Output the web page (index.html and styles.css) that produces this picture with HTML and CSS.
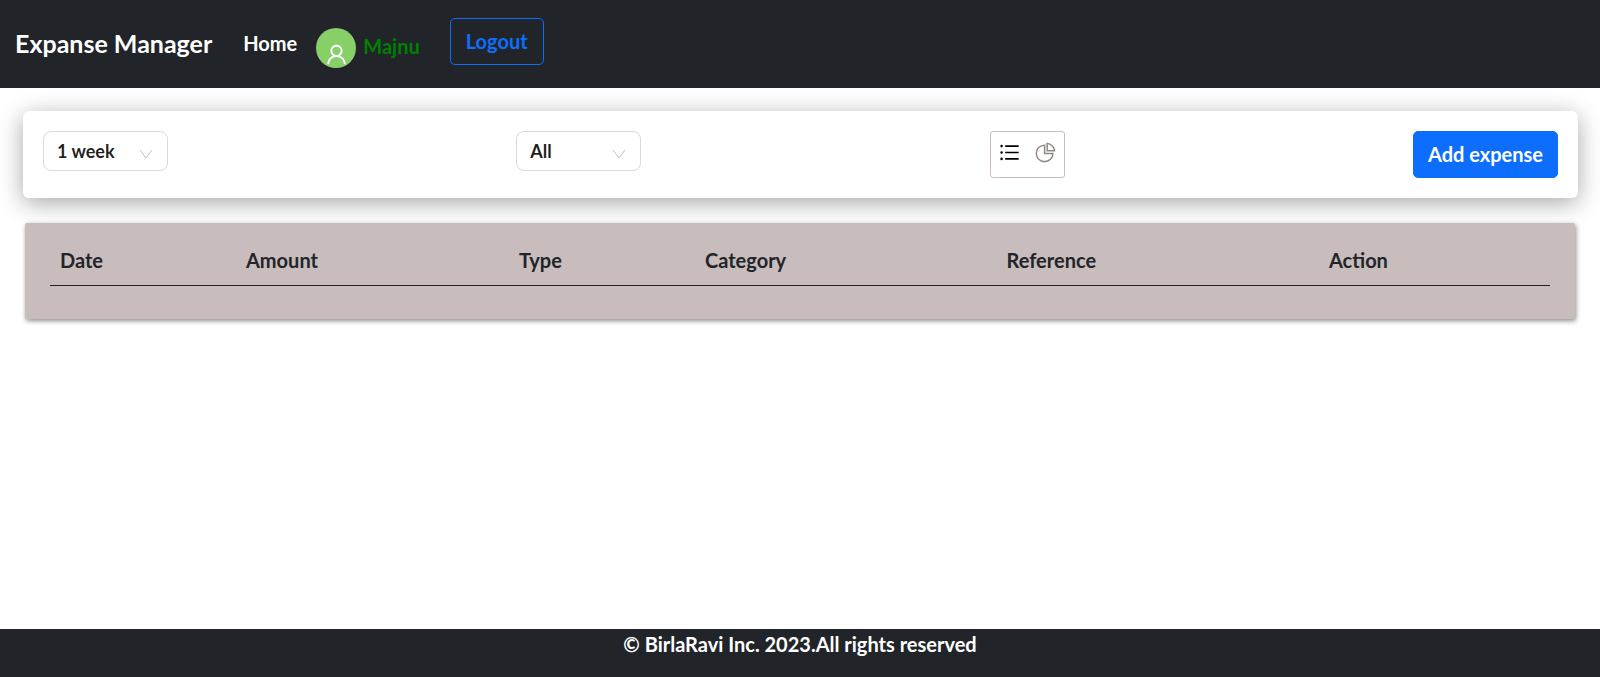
FILE: index.html
```html
<!DOCTYPE html>
<html lang="en">
    <head>
        <meta charset="UTF-8">
        <meta name="viewport" content="width=device-width, initial-scale=1.0">
        <title>Expanse Manager</title>
        <link rel="stylesheet" href="styles.css">
    </head>
    <body>
        <header class="navbar">
            <a class="brand" href="#">Expanse Manager</a>
            <a class="nav-link" href="#">Home</a>
            <div class="user">
                <span class="avatar">
                    <svg viewBox="0 0 1024 1024" width="25" height="25" fill="currentColor" aria-hidden="true">
                        <path d="M858.500 763.600a374 374 0 0 0-80.600-119.500 375.630 375.630 0 0 0-119.500-80.600c-.4-.2-.8-.3-1.200-.5C719.500 518 760 444.700 760 362c0-137-111-248-248-248S264 225 264 362c0 82.700 40.500 156 102.800 201.100-.4.200-.8.300-1.200.5-44.800 18.900-85 46-119.500 80.600a375.630 375.630 0 0 0-80.600 119.500A371.700 371.700 0 0 0 136 901.800a8 8 0 0 0 8 8.200h60c4.400 0 7.900-3.500 8-7.800 2-77.200 33-149.500 87.800-204.300 56.700-56.700 132-87.900 212.200-87.900s155.500 31.200 212.200 87.900C779 752.700 810 825 812 902.200c.1 4.400 3.600 7.800 8 7.800h60a8 8 0 0 0 8-8.200c-1-47.800-10.900-94.300-29.500-138.200zM512 534c-45.900 0-89.100-17.900-121.600-50.400S340 407.900 340 362c0-45.900 17.900-89.100 50.400-121.600S466.100 190 512 190s89.100 17.900 121.600 50.400S684 316.100 684 362c0 45.900-17.900 89.100-50.400 121.600S557.900 534 512 534z"/>
                    </svg>
                </span>
                <span class="username">Majnu</span>
            </div>
            <button class="btn btn-outline" type="button">Logout</button>
        </header>

        <main>
            <div class="filters">
                <div class="select">
                    <select id="frequency" aria-label="Frequency">
                        <option>1 week</option>
                        <option>1 month</option>
                        <option>1 year</option>
                    </select>
                    <svg viewBox="0 0 14 14" width="14" height="14" aria-hidden="true"><path d="M1 3l6 8 6-8"/></svg>
                </div>
                <div class="select">
                    <select id="type" aria-label="Type">
                        <option>All</option>
                        <option>Income</option>
                        <option>Expense</option>
                    </select>
                    <svg viewBox="0 0 14 14" width="14" height="14" aria-hidden="true"><path d="M1 3l6 8 6-8"/></svg>
                </div>
                <div class="view-switch">
                    <button class="active" type="button" aria-label="Table view">
                        <svg viewBox="0 0 1024 1024" width="23" height="23" fill="currentColor" aria-hidden="true">
                            <path d="M912 192H328c-4.400 0-8 3.600-8 8v56c0 4.400 3.600 8 8 8h584c4.400 0 8-3.600 8-8v-56c0-4.400-3.600-8-8-8zm0 284H328c-4.400 0-8 3.600-8 8v56c0 4.400 3.600 8 8 8h584c4.400 0 8-3.600 8-8v-56c0-4.400-3.600-8-8-8zm0 284H328c-4.400 0-8 3.600-8 8v56c0 4.400 3.600 8 8 8h584c4.400 0 8-3.600 8-8v-56c0-4.400-3.600-8-8-8zM104 228a56 56 0 1 0 112 0 56 56 0 1 0-112 0zm0 284a56 56 0 1 0 112 0 56 56 0 1 0-112 0zm0 284a56 56 0 1 0 112 0 56 56 0 1 0-112 0z"/>
                        </svg>
                    </button>
                    <button type="button" aria-label="Chart view">
                        <svg viewBox="0 0 1024 1024" width="23" height="23" fill="currentColor" aria-hidden="true">
                            <path d="M864 518H506V160c0-4.400-3.600-8-8-8h-26a398.460 398.460 0 0 0-282.800 117.100 398.190 398.190 0 0 0-85.700 127.100A397.610 397.610 0 0 0 72 552a398.460 398.460 0 0 0 117.100 282.800c36.700 36.700 79.500 65.600 127.100 85.700A397.610 397.610 0 0 0 472 952a398.460 398.460 0 0 0 282.800-117.100c36.700-36.700 65.600-79.500 85.700-127.100A397.610 397.610 0 0 0 872 552v-26c0-4.400-3.600-8-8-8zM705.700 787.800A331.590 331.590 0 0 1 470.400 884c-88.100-.4-170.900-34.900-233.200-97.200C174.500 724.100 140 640.700 140 552c0-88.700 34.500-172.100 97.200-234.800 54.600-54.600 124.900-87.900 200.800-95.500V586h364.300c-7.700 76.300-41.300 147-96.600 201.800zM952 462.400l-2.600-28.200c-8.500-92.100-49.400-179-115.200-244.600A399.400 399.400 0 0 0 589 74.600L560.700 72c-4.700-.4-8.700 3.200-8.700 7.900V464c0 4.400 3.600 8 8 8l384-1c4.700 0 8.400-4 8-8.600zm-332.200-58.200V147.600a332.240 332.240 0 0 1 166.400 89.800c45.700 45.600 77 103.600 90 166.100l-256.400.7z"/>
                        </svg>
                    </button>
                </div>
                <button class="btn btn-primary" type="button">Add expense</button>
            </div>

            <div class="content">
                <table>
                    <thead>
                        <tr>
                            <th class="col-date">Date</th>
                            <th class="col-amount">Amount</th>
                            <th class="col-type">Type</th>
                            <th class="col-category">Category</th>
                            <th class="col-reference">Reference</th>
                            <th class="col-action">Action</th>
                        </tr>
                    </thead>
                    <tbody></tbody>
                </table>
            </div>
        </main>

        <footer class="footer">© BirlaRavi Inc. 2023.All rights reserved</footer>
    </body>
</html>
```
FILE: styles.css
```css
* {
    box-sizing: border-box;
}

body {
    font-family: Lato, "Noto Sans", sans-serif;
    font-size: 20px;
    font-weight: 700;
    line-height: 30px;
    color: #212529;
    background-color: #fff;
    margin: 0;
    min-height: 100vh;
    display: flex;
    flex-direction: column;
}

button,
select {
    font: inherit;
    cursor: pointer;
}

svg {
    display: block;
}

main {
    flex: 1;
}

/* Navbar */
.navbar {
    display: flex;
    align-items: center;
    height: 88px;
    padding: 0 15px;
    background-color: #212529;
}

.navbar a {
    color: #fff;
    text-decoration: none;
    padding-bottom: 3px;
}

.brand {
    font-size: 25px;
    margin-right: 31px;
}

.nav-link {
    margin-right: 19px;
}

.user {
    display: flex;
    align-items: center;
    gap: 7px;
    margin: 8px 30px 0 0;
}

.avatar {
    display: flex;
    align-items: flex-end;
    justify-content: center;
    width: 40px;
    height: 40px;
    padding-bottom: 1px;
    border-radius: 50%;
    background-color: #87d068;
    color: #fff;
}

.username {
    padding-bottom: 4px;
    color: green;
}

.btn {
    padding: 8px 15px;
    line-height: 29px;
    border: 1px solid #0d6efd;
    border-radius: 5px;
}

.btn-outline {
    margin-bottom: 5px;
    background: transparent;
    color: #0d6efd;
}

.btn-primary {
    padding: 8px 14px;
    background-color: #0d6efd;
    color: #fff;
}

/* Filters */
.filters {
    display: flex;
    justify-content: space-between;
    align-items: flex-start;
    margin: 23px 22px 25px 23px;
    padding: 20px;
    border-radius: 6px;
    background-color: #fff;
    box-shadow: 0 5px 25px rgba(0, 0, 0, 0.35);
}

.select {
    position: relative;
    width: 125px;
}

.select select {
    appearance: none;
    display: block;
    width: 100%;
    height: 40px;
    padding: 0 30px 0 13px;
    border: 1px solid #d9d9d9;
    border-radius: 8px;
    background-color: #fff;
    color: rgba(0, 0, 0, 0.88);
    font-size: 18px;
}

.select svg {
    position: absolute;
    top: 16px;
    right: 15px;
    fill: none;
    stroke: #bfbfbf;
    pointer-events: none;
}

.view-switch {
    display: flex;
    justify-content: space-between;
    width: 75px;
    height: 47px;
    padding: 0 7px;
    border: 1px solid #c8bcbc;
    border-radius: 3px;
}

.view-switch button {
    padding: 0 0 5px;
    border: none;
    background: none;
    color: #938888;
}

.view-switch .active {
    color: #000;
}

/* Table */
.content {
    margin: 0 25px 25px;
    padding: 12px 25px 33px;
    border-radius: 2px;
    background-color: #c8bcbc;
    box-shadow: 1px 2px 5px rgba(0, 0, 0, 0.45);
}

table {
    width: 100%;
    table-layout: fixed;
    border-collapse: collapse;
}

th {
    padding: 10px;
    border-bottom: 1px solid #212529;
    text-align: left;
}

.col-date,
.col-type {
    width: 12.4%;
}

.col-amount {
    width: 18.2%;
}

.col-category {
    width: 20.1%;
}

.col-reference {
    width: 21.5%;
}

.footer {
    height: 48px;
    background-color: #212529;
    color: #fff;
    text-align: center;
}
```
